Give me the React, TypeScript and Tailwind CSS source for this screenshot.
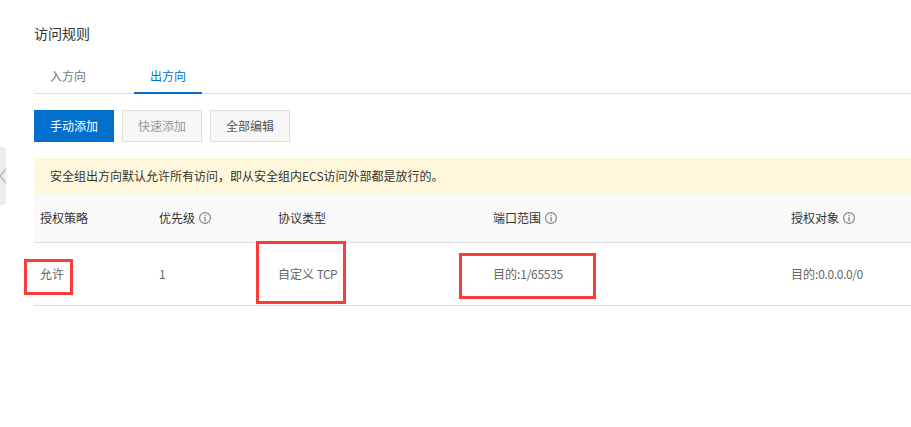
import type { ReactNode } from 'react';

const font = "font-['Noto_Sans_CJK_SC',sans-serif]";

function InfoIcon() {
  return (
    <svg width="12" height="12" viewBox="0 0 12 12" fill="none" className="ml-[4px] shrink-0">
      <circle cx="6" cy="6" r="5.4" stroke="#808080" strokeWidth="1.1" />
      <rect x="5.4" y="2.6" width="1.3" height="1.3" fill="#808080" />
      <rect x="5.4" y="4.9" width="1.3" height="4.5" fill="#808080" />
    </svg>
  );
}

function HeadCell({ children, info }: { children: ReactNode; info?: boolean }) {
  return (
    <div className="flex items-center pl-[6px] text-xs text-[#333]">
      {children}
      {info && <InfoIcon />}
    </div>
  );
}

function BodyCell({ children }: { children: ReactNode }) {
  return <div className="flex items-center pl-[6px] text-xs text-[#666] whitespace-pre">{children}</div>;
}

const gridCols = 'grid grid-cols-[119px_119px_215px_298px_1fr]';

export default function App() {
  return (
    <div className={`${font} relative h-[427px] w-[911px] overflow-hidden bg-white pl-[34px]`}>
      <h3 className="pt-[25px] text-sm leading-4 font-normal text-[#333]">访问规则</h3>

      {/* Tabs */}
      <div className="mt-[19px] flex h-[34px] border-b border-[#ddd]">
        <div className="flex w-[68px] items-center justify-center pb-px text-xs text-[#777]">入方向</div>
        <div className="ml-[32px] -mb-px flex w-[68px] items-center justify-center border-b-2 border-[#0070cc] text-xs text-[#0070cc]">
          出方向
        </div>
      </div>

      {/* Toolbar */}
      <div className="mt-[16px] flex gap-2">
        <button className="h-8 w-20 bg-[#0070cc] text-xs text-white">手动添加</button>
        <button className="h-8 w-20 border border-[#ddd] bg-[#f7f7f7] text-xs text-[#999]">快速添加</button>
        <button className="h-8 w-20 border border-[#ddd] bg-[#f7f7f7] text-xs text-[#555]">全部编辑</button>
      </div>

      {/* Notice */}
      <div className="mt-[16px] flex h-9 items-center bg-[#fff7dc] pl-4 text-xs text-[#333]">
        安全组出方向默认允许所有访问，即从安全组内ECS访问外部都是放行的。
      </div>

      {/* Table */}
      <div className={`${gridCols} h-[49px] border-b border-[#ddd] bg-[#f9f9f9]`}>
        <HeadCell>授权策略</HeadCell>
        <HeadCell info>优先级</HeadCell>
        <HeadCell>协议类型</HeadCell>
        <HeadCell info>端口范围</HeadCell>
        <HeadCell info>授权对象</HeadCell>
      </div>
      <div className={`${gridCols} h-[63px] border-b border-[#ddd]`}>
        <BodyCell>允许</BodyCell>
        <BodyCell>1</BodyCell>
        <BodyCell>
          自定义 <span className="tracking-[-0.6px]">TCP</span>
        </BodyCell>
        <BodyCell>
          目的:<span className="tracking-[-0.3px]">1/65535</span>
        </BodyCell>
        <BodyCell>
          目的:<span className="tracking-[-0.4px]">0.0.0.0/0</span>
        </BodyCell>
      </div>

      {/* Collapsed side handle */}
      <div className="absolute top-[147px] left-0 flex h-[58px] w-[6px] items-center overflow-hidden rounded-r-sm bg-[#ececec]">
        <svg width="6" height="16" viewBox="0 0 6 16" fill="none" className="shrink-0">
          <path d="M6 1 L0 8 L6 15" stroke="#b4b4b4" strokeWidth="1.2" />
        </svg>
      </div>

      {/* Red annotation boxes */}
      <div className="absolute top-[259px] left-[24px] h-[36px] w-[49px] border-[3px] border-[#fb3a3a]" />
      <div className="absolute top-[241px] left-[256px] h-[63px] w-[90px] border-[3px] border-[#fb3a3a]" />
      <div className="absolute top-[253px] left-[459px] h-[46px] w-[137px] border-[3px] border-[#fb3a3a]" />
    </div>
  );
}
